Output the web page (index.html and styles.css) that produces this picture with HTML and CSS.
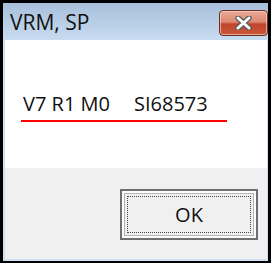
FILE: index.html
```html
<!DOCTYPE html>
<html lang="en">
<head>
    <meta charset="UTF-8">
    <meta name="viewport" content="width=device-width, initial-scale=1.0">
    <title>VRM, SP</title>
    <link rel="stylesheet" href="styles.css">
</head>
<body>
      <div id="dialog">
        <div id="titlebar">
            <span id="title">VRM, SP</span>
            <button id="close" aria-label="Close">
                <svg width="17" height="14" viewBox="0 0 17 14">
                    <path d="M3 2 L14 12 M14 2 L3 12" stroke="#5a5a5a" stroke-width="5.5" stroke-linecap="round"/>
                    <path d="M3 2 L14 12 M14 2 L3 12" stroke="#ffffff" stroke-width="3" stroke-linecap="round"/>
                </svg>
            </button>
        </div>
        <div id="message">
            <div id="version"><span>V7 R1 M0</span><span class="gap">SI68573</span></div>
        </div>
        <div id="buttons">
            <button id="ok"><span>OK</span></button>
        </div>
      </div>
</body>
</html>
```

FILE: styles.css
```css
        *
        {
            box-sizing: border-box;
        }
        body
        {
            margin: 0;
            background-color: #000;
            font-family: "Open Sans", "DejaVu Sans", sans-serif;
        }
        #dialog
        {
            margin: 3px 3px 0 3px;
            width: 265px;
            display: flex;
            flex-direction: column;
        }
        #titlebar
        {
            height: 37px;
            display: flex;
            justify-content: space-between;
            align-items: center;
            background: linear-gradient(#a7bfda, #c8dcf0);
        }
        #title
        {
            padding-left: 7px;
            font-size: 21px;
            color: #111;
        }
        #close
        {
            width: 49px;
            height: 26px;
            align-self: flex-start;
            margin-top: 7px;
            padding: 0;
            border: 1px solid #6a3026;
            border-radius: 4px;
            background: linear-gradient(#e9a996 0%, #dc8a74 45%, #c2452a 55%, #c9583b 100%);
            box-shadow: inset 0 0 0 1px rgba(255, 220, 210, 0.6);
            display: flex;
            justify-content: center;
            align-items: center;
        }
        #message
        {
            height: 128px;
            background-color: #fff;
            border-left: 2px solid #cfe0f4;
            border-right: 1px solid #cfe0f4;
            padding: 53px 0 0 16px;
        }
        #version
        {
            display: inline-block;
            width: 206px;
            padding: 0 0 5px 2px;
            border-bottom: 2px solid #ff0000;
            font-size: 20px;
            line-height: 22px;
            color: #111;
        }
        #version .gap
        {
            margin-left: 24px;
        }
        #buttons
        {
            height: 93px;
            background-color: #f0f0f0;
            border-left: 2px solid #cfe0f4;
            border-right: 1px solid #cfe0f4;
            border-bottom: 2px solid #cfe0f4;
            display: flex;
            justify-content: flex-end;
            align-items: flex-start;
            padding: 21px 9px 0 0;
        }
        #ok
        {
            width: 138px;
            height: 51px;
            padding: 5px;
            border: 2px solid #6f6f6f;
            background-color: #f0f0f0;
            box-shadow: inset 0 0 0 2px #fdfdfd, inset 0 0 0 3px #b4b4b4;
            font-family: inherit;
            font-size: 20px;
            color: #111;
        }
        #ok>span
        {
            display: flex;
            justify-content: center;
            align-items: center;
            height: 100%;
            border: 1px dotted #444;
        }
```
